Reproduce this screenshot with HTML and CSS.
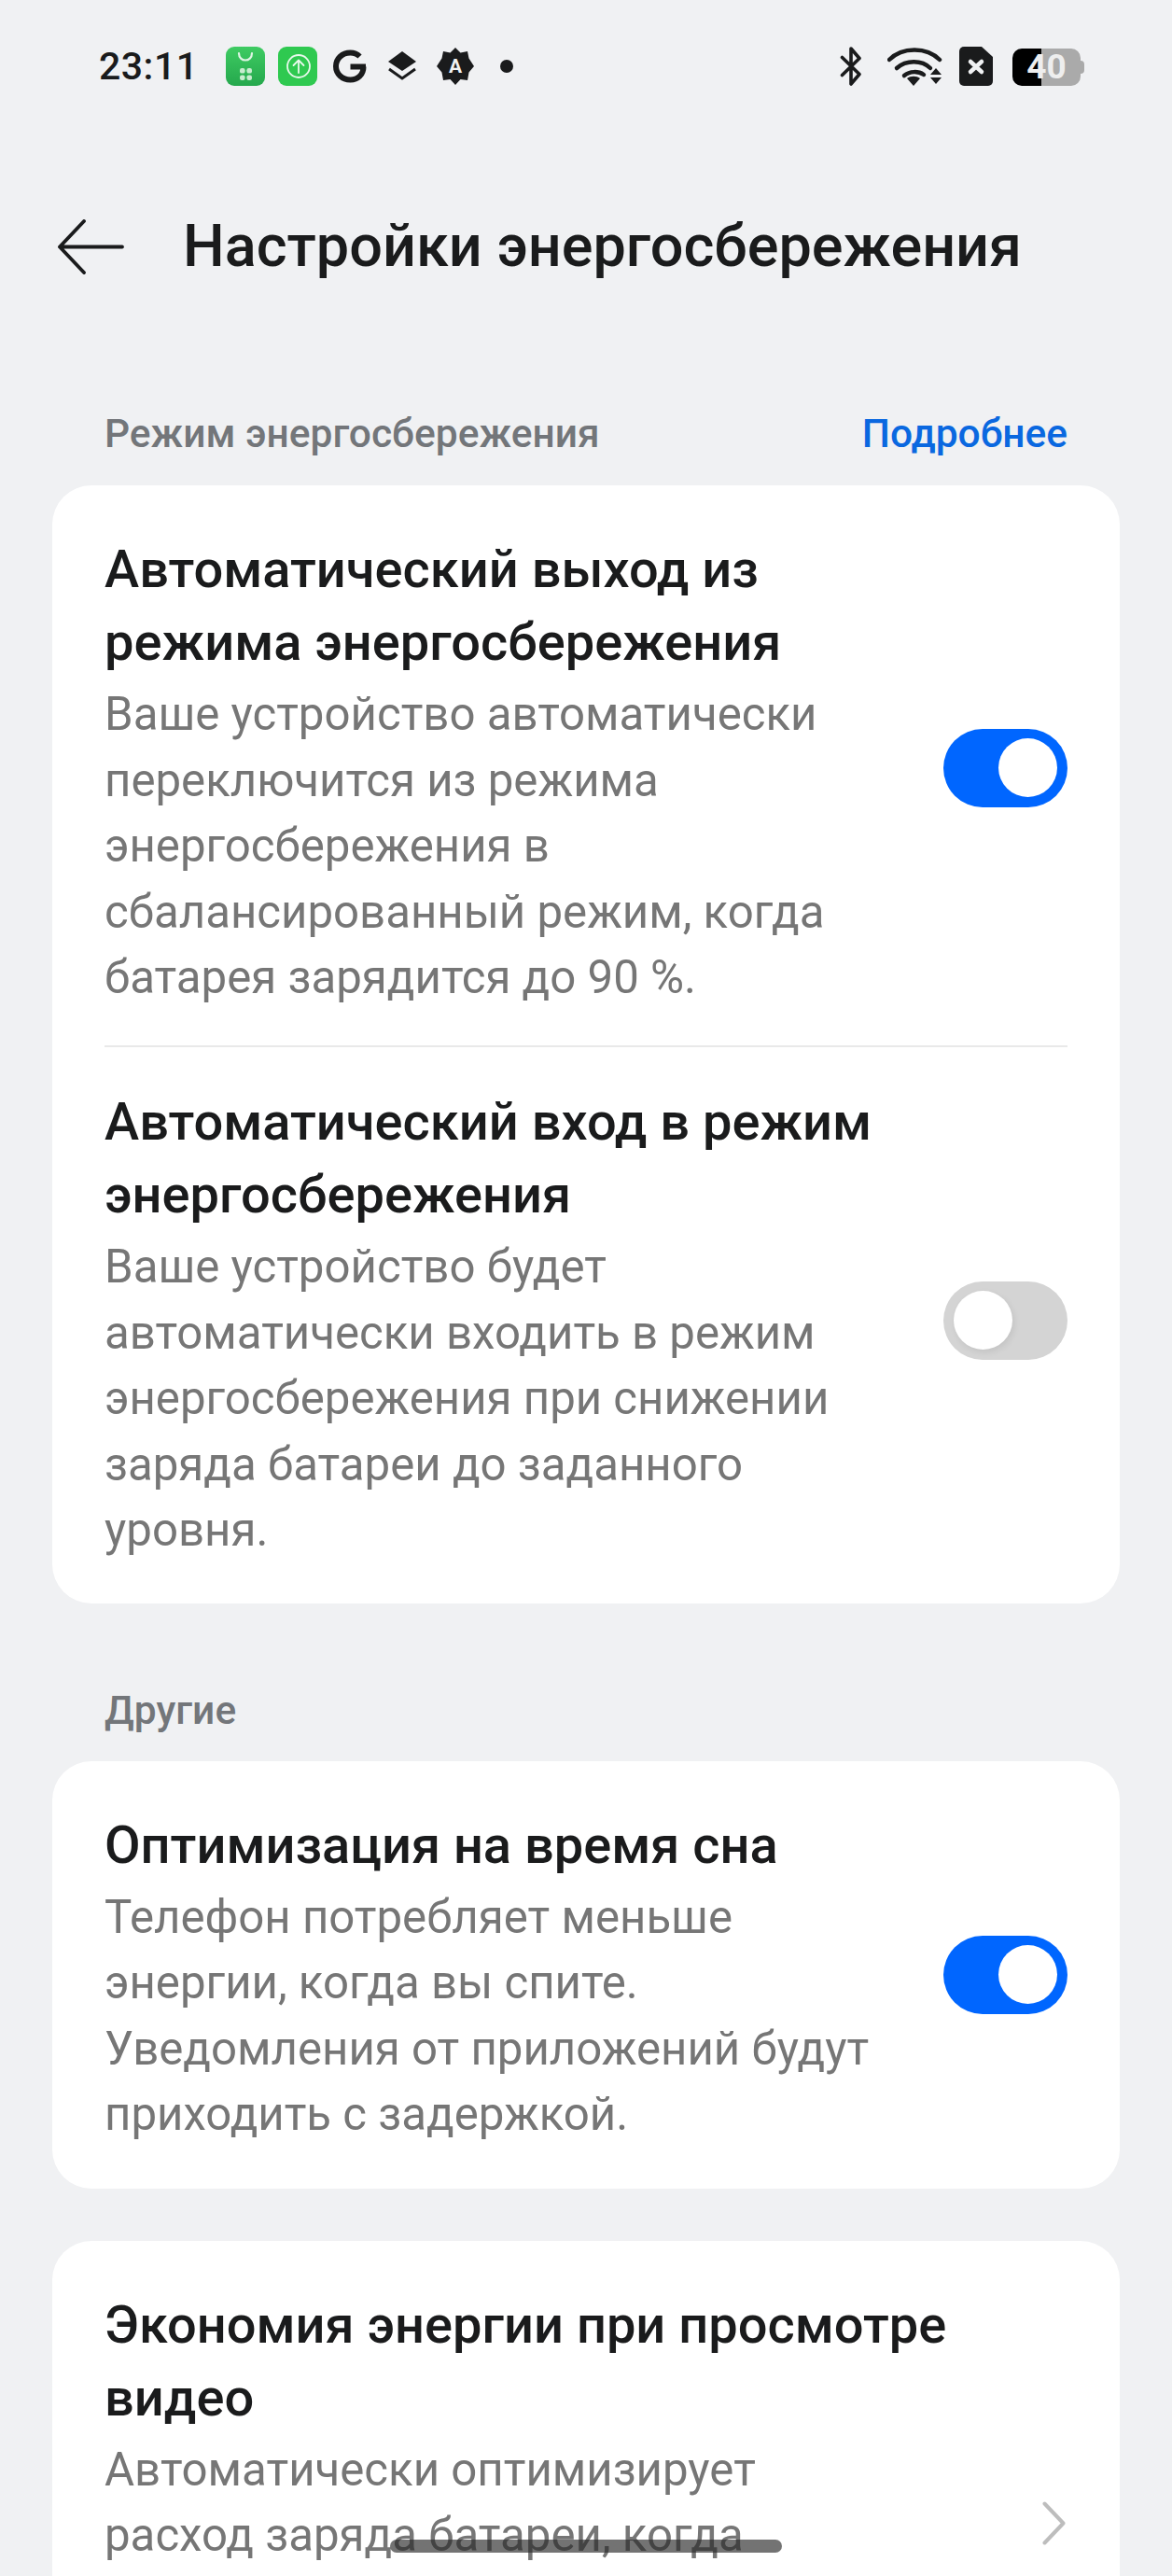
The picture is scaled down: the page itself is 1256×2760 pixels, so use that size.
FILE: index.html
```html
<!DOCTYPE html>
<html lang="ru">
<head>
    <meta charset="UTF-8">
    <meta name="viewport" content="width=device-width, initial-scale=1.0">
    <title>Настройки энергосбережения</title>
    <link rel="stylesheet" href="styles.css">
</head>
<body>
<div class="screen">
    <!-- Status bar -->
    <div class="status-bar">
        <div class="status-left">
            <span class="clock">23:11</span>
            <svg class="app-icon icon-store" viewBox="0 0 42 42">
                <defs>
                    <linearGradient id="storeGreen" x1="0" y1="0" x2="0" y2="1">
                        <stop offset="0" stop-color="#3ecb62"/>
                        <stop offset="1" stop-color="#25a84d"/>
                    </linearGradient>
                </defs>
                <rect width="42" height="42" rx="9" fill="url(#storeGreen)"/>
                <path d="M14 7c0 10 14 10 14 0" fill="none" stroke="#dff5e4" stroke-width="2.2" stroke-linecap="round"/>
                <rect x="15" y="23" width="5.6" height="5.6" rx="2.2" fill="#c8eccf"/>
                <rect x="22.4" y="23" width="5.6" height="5.6" rx="2.2" fill="#c8eccf"/>
                <rect x="15" y="30.4" width="5.6" height="5.6" rx="2.2" fill="#c8eccf"/>
                <rect x="22.4" y="30.4" width="5.6" height="5.6" rx="2.2" fill="#c8eccf"/>
            </svg>
            <svg class="app-icon icon-update" viewBox="0 0 42 42">
                <rect width="42" height="42" rx="9" fill="#2fc950"/>
                <circle cx="22" cy="21" r="12" fill="none" stroke="#e8f9ec" stroke-width="1.8"/>
                <path d="M22 28V14.500M16.500 20l5.500-5.500 5.500 5.500" fill="none" stroke="#e8f9ec" stroke-width="1.8" stroke-linecap="round" stroke-linejoin="round"/>
            </svg>
            <svg class="app-icon icon-g" viewBox="0 0 36 36">
                <path d="M35 18.500H18.500M32.500 18.500c0 8.500-6 14-14 14C9.500 32.500 3 26 3 18S9.500 3.500 18.500 3.500c4 0 7.500 1.500 10 4" fill="none" stroke="#1a1b1c" stroke-width="6"/>
            </svg>
            <svg class="app-icon icon-layers" viewBox="0 0 32 34">
                <path d="M16 1 31 12 16 22 1 12z" fill="#1a1b1c"/>
                <path d="M2 20l14 10 14-10" fill="none" stroke="#1a1b1c" stroke-width="3"/>
            </svg>
            <svg class="app-icon icon-auto" viewBox="0 0 40 40">
                <path d="M20 0l5.500 5.500 7.500-1.500 1.500 7.500L40 20l-5.500 6.500L33 35l-7.500-1L20 40l-5.500-6-7.500 1-1.500-8.500L0 20l5.500-8.500L7 4l7.500 1.500z" fill="#1a1b1c"/>
                <text x="20" y="27" class="auto-letter">A</text>
            </svg>
            <span class="notif-dot"></span>
        </div>
        <div class="status-right">
            <svg class="icon-bt" viewBox="0 0 24 42">
                <path d="M2.500 11.500 21 29.500 12 40V2l9 10.500L2.500 30.500" fill="none" stroke="#1a1b1c" stroke-width="3.600" stroke-linecap="round" stroke-linejoin="round"/>
            </svg>
            <svg class="icon-wifi" viewBox="0 0 59 42">
                <path d="M2 14C16 0 42 0 56 14" fill="none" stroke="#1a1b1c" stroke-width="4.500" stroke-linecap="round"/>
                <path d="M10 23c10-9 27-9 36 0" fill="none" stroke="#1a1b1c" stroke-width="4.500" stroke-linecap="round"/>
                <path d="M18 31c6-5 15-5 21-1" fill="none" stroke="#1a1b1c" stroke-width="4.500" stroke-linecap="round"/>
                <path d="M21 34c4-3 10-3 14 0l-7 8z" fill="#1a1b1c"/>
                <path d="M52 23l6 7H46zM46 33h12l-6 7z" fill="#1a1b1c"/>
            </svg>
            <svg class="icon-sim" viewBox="0 0 36 42">
                <path d="M5 0h19l12 11v26a5 5 0 0 1-5 5H5a5 5 0 0 1-5-5V5a5 5 0 0 1 5-5z" fill="#1a1b1c"/>
                <path d="M12 16l12 11M24 16 12 27" stroke="#f0f1f3" stroke-width="4.500" stroke-linecap="round"/>
            </svg>
            <div class="battery">
                <span class="battery-level">40</span>
                <span class="battery-cap"></span>
            </div>
        </div>
    </div>

    <!-- Header -->
    <div class="top-bar">
        <svg class="back-icon" viewBox="0 0 71 59">
            <path d="M69 29.500H2M28 2 2 29.500 28 57" fill="none" stroke="#1a1b1c" stroke-width="3.800" stroke-linecap="round" stroke-linejoin="round"/>
        </svg>
        <h1>Настройки энергосбережения</h1>
    </div>

    <div class="section-head section-first">
        <span>Режим энергосбережения</span>
        <span class="more-link">Подробнее</span>
    </div>
    <div class="card">
        <div class="row row-before-divider">
            <div class="row-text">
                <div class="row-title">Автоматический выход из режима энергосбережения</div>
                <div class="row-desc">Ваше устройство автоматически переключится из режима энергосбережения в сбалансированный режим, когда батарея зарядится до 90 %.</div>
            </div>
            <span class="switch switch-on"></span>
        </div>
        <div class="divider"></div>
        <div class="row row-after-divider">
            <div class="row-text">
                <div class="row-title">Автоматический вход в режим энергосбережения</div>
                <div class="row-desc">Ваше устройство будет автоматически входить в режим энергосбережения при снижении заряда батареи до заданного уровня.</div>
            </div>
            <span class="switch"></span>
        </div>
    </div>

    <div class="section-head section-other">
        <span>Другие</span>
    </div>
    <div class="card">
        <div class="row">
            <div class="row-text">
                <div class="row-title">Оптимизация на время сна</div>
                <div class="row-desc">Телефон потребляет меньше энергии, когда вы спите. Уведомления от приложений будут приходить с задержкой.</div>
            </div>
            <span class="switch switch-on"></span>
        </div>
    </div>

    <div class="card card-video">
        <div class="row row-video">
            <div class="row-text">
                <div class="row-title">Экономия энергии при просмотре видео</div>
                <div class="row-desc">Автоматически оптимизирует расход заряда батареи, когда</div>
            </div>
            <svg class="chevron" viewBox="0 0 25 47">
                <path d="M2.500 2.500 22.500 23.500 2.500 44.500" fill="none" stroke="#bdbdbd" stroke-width="4" stroke-linecap="round" stroke-linejoin="round"/>
            </svg>
        </div>
    </div>

    <div class="home-bar"></div>
</div>
</body>
</html>
```

FILE: styles.css
```css
* {
    box-sizing: border-box;
}
html, body {
    margin: 0;
    padding: 0;
}
body {
    font-family: Roboto, "Liberation Sans", sans-serif;
    background-color: #f0f1f3;
    color: #1a1b1c;
}
.screen {
    position: relative;
    width: 1256px;
    height: 2760px;
    overflow: hidden;
}

/* status bar */
.status-bar {
    display: flex;
    justify-content: space-between;
    align-items: center;
    height: 42px;
    margin-top: 50px;
    padding: 0 98px 0 106px;
}
.status-left, .status-right {
    display: flex;
    align-items: center;
}
.clock {
    width: 136px;
    font-size: 41px;
    font-weight: 500;
    letter-spacing: 0.5px;
}
.app-icon {
    display: block;
    flex: none;
}
.icon-store {
    width: 42px;
    height: 42px;
    margin-right: 14px;
}
.icon-update {
    width: 42px;
    height: 42px;
    margin-right: 17px;
}
.icon-g {
    width: 36px;
    height: 36px;
    margin-right: 22px;
}
.icon-layers {
    width: 32px;
    height: 34px;
    margin-right: 21px;
}
.icon-auto {
    width: 40px;
    height: 40px;
    margin-right: 28px;
}
.auto-letter {
    font-size: 21px;
    font-weight: 700;
    fill: #f0f1f3;
    text-anchor: middle;
}
.notif-dot {
    width: 14px;
    height: 14px;
    border-radius: 50%;
    background-color: #1a1b1c;
}
.icon-bt {
    width: 24px;
    height: 42px;
    margin-right: 27px;
}
.icon-wifi {
    width: 59px;
    height: 42px;
    margin-right: 18px;
}
.icon-sim {
    width: 36px;
    height: 42px;
    margin-right: 21px;
}
.battery {
    position: relative;
    width: 73px;
    height: 40px;
    margin-top: 2px;
    border-radius: 10px;
    background: linear-gradient(90deg, #000 0, #000 42%, #aaaaaa 42%, #aaaaaa 100%);
    text-align: center;
}
.battery-level {
    display: block;
    font-size: 37px;
    line-height: 40px;
    font-weight: 700;
    color: #eeeeee;
}
.battery-cap {
    position: absolute;
    right: -4px;
    top: 13px;
    width: 4px;
    height: 14px;
    border-radius: 0 4px 4px 0;
    background-color: #aaaaaa;
}

/* header */
.top-bar {
    display: flex;
    align-items: center;
    height: 80px;
    margin-top: 132px;
    padding-left: 62px;
}
.back-icon {
    width: 71px;
    height: 59px;
    flex: none;
}
h1 {
    margin: 0 0 0 63px;
    font-size: 63px;
    font-weight: 500;
    line-height: 80px;
    white-space: nowrap;
}

/* sections */
.section-head {
    display: flex;
    justify-content: space-between;
    padding: 0 112px;
    font-size: 42.5px;
    font-weight: 500;
    line-height: 56px;
    color: #73767a;
    white-space: nowrap;
}
.section-first {
    margin-top: 133px;
    margin-bottom: 27px;
}
.section-other {
    margin-top: 87px;
    margin-bottom: 26px;
}
.more-link {
    color: #0a68e0;
}
.card {
    margin: 0 56px;
    background-color: #fff;
    border-radius: 42px;
}
.card-video {
    margin-top: 56px;
}
.row {
    display: flex;
    align-items: center;
    padding: 51px 56px 44px;
}
.row .switch {
    margin-bottom: 7px;
}
.row-before-divider {
    padding-bottom: 37px;
}
.row-after-divider {
    padding-top: 41.5px;
    padding-bottom: 43px;
}
.row-video {
    position: relative;
    min-height: 602px;
    align-items: flex-start;
}
.row-text {
    flex: 1;
    min-width: 0;
    padding-right: 50px;
}
.row-title {
    font-size: 56px;
    font-weight: 500;
    line-height: 78px;
}
.row-desc {
    margin-top: 3px;
    font-size: 49.2px;
    line-height: 70.5px;
    color: #767676;
}
.row-video .row-desc {
    max-width: 800px;
}
.divider {
    height: 2px;
    margin: 0 56px;
    background-color: #e9e9e9;
}

/* switches */
.switch {
    position: relative;
    flex: none;
    width: 133px;
    height: 84px;
    border-radius: 42px;
    background-color: #d4d4d4;
}
.switch::after {
    content: "";
    position: absolute;
    top: 10px;
    left: 11px;
    width: 63px;
    height: 63px;
    border-radius: 50%;
    background-color: #fff;
    box-shadow: 2px 3px 7px rgba(0, 0, 0, 0.08);
}
.switch-on {
    background-color: #0066ff;
}
.switch-on::after {
    left: 59px;
    box-shadow: none;
}

.chevron {
    position: absolute;
    right: 58px;
    top: 279px;
    width: 25px;
    height: 47px;
}
.home-bar {
    position: absolute;
    left: 418px;
    top: 2721px;
    width: 420px;
    height: 14px;
    border-radius: 7px;
    background-color: rgba(40, 40, 40, 0.65);
}
```
